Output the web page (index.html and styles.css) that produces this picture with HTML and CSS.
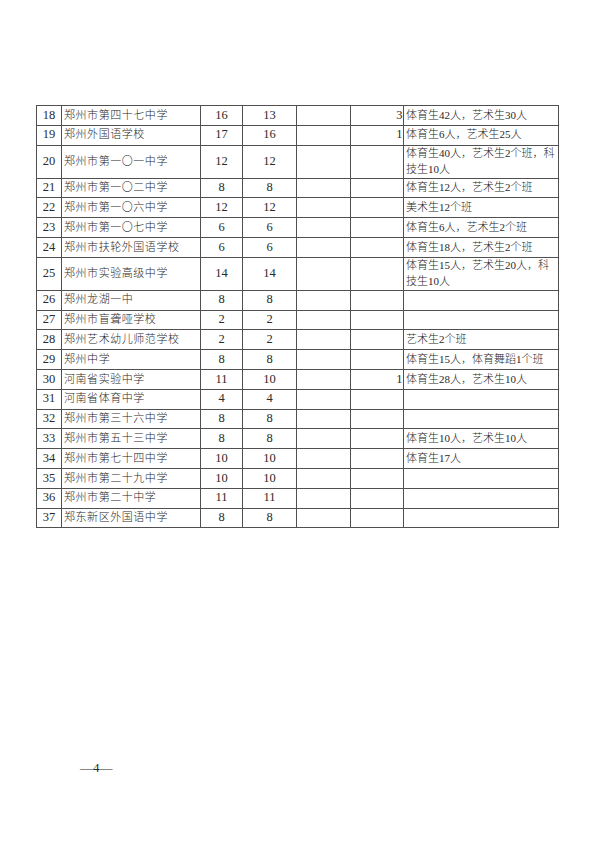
FILE: index.html
```html
<!DOCTYPE html>
<html lang="zh-CN">
<head>
<meta charset="utf-8">
<title>表</title>
<link rel="stylesheet" href="styles.css">
</head>
<body>
<div class="page">
<table class="grid">
<colgroup>
<col class="c-no"><col class="c-name"><col class="c-a"><col class="c-b"><col class="c-c"><col class="c-d"><col class="c-note">
</colgroup>
<tbody>
<tr><td class="no">18</td><td class="name">郑州市第四十七中学</td><td class="num">16</td><td class="num">13</td><td></td><td class="right">3</td><td class="note">体育生42人，艺术生30人</td></tr>
<tr><td class="no">19</td><td class="name">郑州外国语学校</td><td class="num">17</td><td class="num">16</td><td></td><td class="right">1</td><td class="note">体育生6人，艺术生25人</td></tr>
<tr class="tall"><td class="no">20</td><td class="name">郑州市第一〇一中学</td><td class="num">12</td><td class="num">12</td><td></td><td></td><td class="note">体育生40人，艺术生2个班，科技生10人</td></tr>
<tr><td class="no">21</td><td class="name">郑州市第一〇二中学</td><td class="num">8</td><td class="num">8</td><td></td><td></td><td class="note">体育生12人，艺术生2个班</td></tr>
<tr><td class="no">22</td><td class="name">郑州市第一〇六中学</td><td class="num">12</td><td class="num">12</td><td></td><td></td><td class="note">美术生12个班</td></tr>
<tr><td class="no">23</td><td class="name">郑州市第一〇七中学</td><td class="num">6</td><td class="num">6</td><td></td><td></td><td class="note">体育生6人，艺术生2个班</td></tr>
<tr><td class="no">24</td><td class="name">郑州市扶轮外国语学校</td><td class="num">6</td><td class="num">6</td><td></td><td></td><td class="note">体育生18人，艺术生2个班</td></tr>
<tr class="tall"><td class="no">25</td><td class="name">郑州市实验高级中学</td><td class="num">14</td><td class="num">14</td><td></td><td></td><td class="note">体育生15人，艺术生20人，科技生10人</td></tr>
<tr><td class="no">26</td><td class="name">郑州龙湖一中</td><td class="num">8</td><td class="num">8</td><td></td><td></td><td class="note"></td></tr>
<tr><td class="no">27</td><td class="name">郑州市盲聋哑学校</td><td class="num">2</td><td class="num">2</td><td></td><td></td><td class="note"></td></tr>
<tr><td class="no">28</td><td class="name">郑州艺术幼儿师范学校</td><td class="num">2</td><td class="num">2</td><td></td><td></td><td class="note">艺术生2个班</td></tr>
<tr><td class="no">29</td><td class="name">郑州中学</td><td class="num">8</td><td class="num">8</td><td></td><td></td><td class="note">体育生15人，体育舞蹈1个班</td></tr>
<tr><td class="no">30</td><td class="name">河南省实验中学</td><td class="num">11</td><td class="num">10</td><td></td><td class="right">1</td><td class="note">体育生28人，艺术生10人</td></tr>
<tr><td class="no">31</td><td class="name">河南省体育中学</td><td class="num">4</td><td class="num">4</td><td></td><td></td><td class="note"></td></tr>
<tr><td class="no">32</td><td class="name">郑州市第三十六中学</td><td class="num">8</td><td class="num">8</td><td></td><td></td><td class="note"></td></tr>
<tr><td class="no">33</td><td class="name">郑州市第五十三中学</td><td class="num">8</td><td class="num">8</td><td></td><td></td><td class="note">体育生10人，艺术生10人</td></tr>
<tr><td class="no">34</td><td class="name">郑州市第七十四中学</td><td class="num">10</td><td class="num">10</td><td></td><td></td><td class="note">体育生17人</td></tr>
<tr><td class="no">35</td><td class="name">郑州市第二十九中学</td><td class="num">10</td><td class="num">10</td><td></td><td></td><td class="note"></td></tr>
<tr><td class="no">36</td><td class="name">郑州市第二十中学</td><td class="num">11</td><td class="num">11</td><td></td><td></td><td class="note"></td></tr>
<tr><td class="no">37</td><td class="name">郑东新区外国语中学</td><td class="num">8</td><td class="num">8</td><td></td><td></td><td class="note"></td></tr>
</tbody>
</table>
<div class="footer">—4—</div>
</div>
</body>
</html>
```
FILE: styles.css
```css
html, body {
  margin: 0;
  padding: 0;
  background: #ffffff;
}
body {
  font-family: "Liberation Serif", "Noto Sans CJK SC", serif;
  color: #2a2a2a;
  font-size: 11px;
  font-weight: 300;
}
.page {
  width: 596px;
  height: 842px;
  box-sizing: border-box;
  padding: 105px 0 0 36px;
}
.grid {
  border-collapse: collapse;
  table-layout: fixed;
  width: 522px;
}
.c-no { width: 25px; }
.c-name { width: 139px; }
.c-a { width: 42px; }
.c-b { width: 54px; }
.c-c { width: 54px; }
.c-d { width: 53px; }
.c-note { width: 155px; }
.grid tr {
  height: 19.8px;
}
.grid td {
  border: 1px solid #505050;
  padding: 0 2px;
  line-height: 15.5px;
  vertical-align: middle;
  white-space: normal;
  overflow: hidden;
}
.grid tr.tall td {
  padding-top: 0.5px;
  padding-bottom: 0.5px;
}
.no {
  text-align: center;
  font-size: 12.5px;
}
.name {
  letter-spacing: 0.55px;
}
.num {
  text-align: center;
  font-size: 12.5px;
}
.grid td.right {
  text-align: right;
  padding-right: 0.5px;
  font-size: 12.5px;
}
.note {
  text-align: left;
}
.footer {
  margin-top: 232px;
  margin-left: 44px;
  font-size: 13px;
  line-height: 16px;
  font-family: "Liberation Serif", serif;
}
```
